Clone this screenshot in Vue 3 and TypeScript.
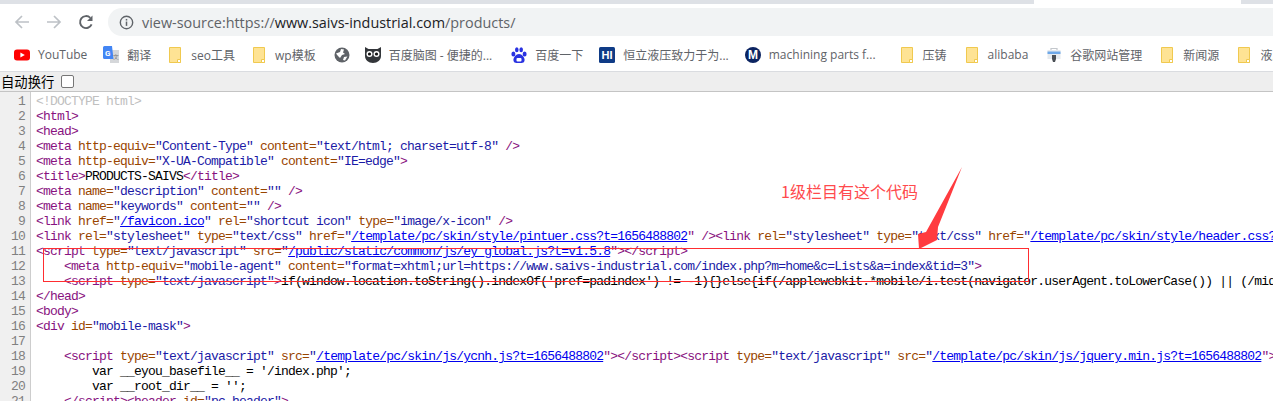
<script setup lang="ts">
type Seg = { c: string; s: string }
const seg = (c: string) => (s: string): Seg => ({ c, s })
const t = seg('tag')
const a = seg('attr')
const v = seg('val')
const l = seg('link')
const x = seg('txt')
const d = seg('doc')
const jsType = [a('type='), v('"text/javascript"')]

const lines: Seg[][] = [
  [d('<!DOCTYPE html>')],
  [t('<html>')],
  [t('<head>')],
  [t('<meta '), a('http-equiv='), v('"Content-Type"'), t(' '), a('content='), v('"text/html; charset=utf-8"'), t(' />')],
  [t('<meta '), a('http-equiv='), v('"X-UA-Compatible"'), t(' '), a('content='), v('"IE=edge"'), t('>')],
  [t('<title>'), x('PRODUCTS-SAIVS'), t('</title>')],
  [t('<meta '), a('name='), v('"description"'), t(' '), a('content='), v('""'), t(' />')],
  [t('<meta '), a('name='), v('"keywords"'), t(' '), a('content='), v('""'), t(' />')],
  [t('<link '), a('href='), v('"'), l('/favicon.ico'), v('"'), t(' '), a('rel='), v('"shortcut icon"'), t(' '), a('type='), v('"image/x-icon"'), t(' />')],
  [t('<link '), a('rel='), v('"stylesheet"'), t(' '), a('type='), v('"text/css"'), t(' '), a('href='), v('"'), l('/template/pc/skin/style/pintuer.css?t=1656488802'), t('" /><link '), a('rel='), v('"stylesheet"'), t(' '), a('type='), v('"text/css"'), t(' '), a('href='), v('"'), l('/template/pc/skin/style/header.css?t=1656488802'), t('" />')],
  [t('<script '), ...jsType, t(' '), a('src='), v('"'), l('/public/static/common/js/ey_global.js?t=v1.5.8'), t('"></' + 'script>')],
  [x('    '), t('<meta '), a('http-equiv='), v('"mobile-agent"'), t(' '), a('content='), v('"format=xhtml;url=https://www.saivs-industrial.com/index.php?m=home&c=Lists&a=index&tid=3"'), t('>')],
  [x('    '), t('<script '), ...jsType, t('>'), x("if(window.location.toString().indexOf('pref=padindex') != -1){}else{if(/applewebkit.*mobile/i.test(navigator.userAgent.toLowerCase()) || (/midp|symbianos|nokia/i))}")],
  [t('</head>')],
  [t('<body>')],
  [t('<div '), a('id='), v('"mobile-mask"'), t('>')],
  [],
  [x('    '), t('<script '), ...jsType, t(' '), a('src='), v('"'), l('/template/pc/skin/js/ycnh.js?t=1656488802'), t('"></' + 'script><script '), ...jsType, t(' '), a('src='), v('"'), l('/template/pc/skin/js/jquery.min.js?t=1656488802'), t('"></' + 'script>')],
  [x("        var __eyou_basefile__ = '/index.php';")],
  [x("        var __root_dir__ = '';")],
  [x('    '), t('</' + 'script><header '), a('id='), v('"pc-header"'), t('>')]
]

type Mark = { icon: string; label?: string; extra?: number }
const marks: Mark[] = [
  { icon: 'yt', label: 'YouTube' },
  { icon: 'tr', label: '翻译', extra: -1 },
  { icon: 'fd', label: 'seo工具', extra: 1 },
  { icon: 'fd', label: 'wp模板', extra: 1 },
  { icon: 'gl', extra: 1 },
  { icon: 'ow', label: '百度脑图 - 便捷的...', extra: -2 },
  { icon: 'pw', label: '百度一下', extra: 2 },
  { icon: 'hi', label: '恒立液压致力于为...', extra: -1 },
  { icon: 'mm', label: 'machining parts f...', extra: -1 },
  { icon: 'fd', label: '压铸', extra: 8 },
  { icon: 'fd', label: 'alibaba', extra: 2 },
  { icon: 'gw', label: '谷歌网站管理', extra: 1 },
  { icon: 'fd', label: '新闻源', extra: 2 },
  { icon: 'fd', label: '液压', extra: 2 }
]
</script>

<template>
  <div class="page">
    <div class="tabstrip">
      <div class="activetab"></div>
    </div>
    <div class="toolbar">
      <svg class="nav" viewBox="0 0 16 16"><path d="M15 8H2.500M8 2 2 8l6 6" fill="none" stroke="#bdc1c6" stroke-width="1.700" /></svg>
      <svg class="nav" viewBox="0 0 16 16"><path d="M1 8h12.500M8 2l6 6-6 6" fill="none" stroke="#bdc1c6" stroke-width="1.700" /></svg>
      <svg class="nav" viewBox="0 0 16 16"><path d="M13.600 10.400A6 6 0 1 1 12.300 3.800" fill="none" stroke="#5f6368" stroke-width="1.900" /><path d="M14.500 1.500v5.500H9z" fill="#5f6368" /></svg>
      <div class="omni">
        <svg class="info" viewBox="0 0 16 16"><circle cx="8" cy="8" r="6.600" fill="none" stroke="#5f6368" stroke-width="1.500" /><rect x="7.200" y="7" width="1.600" height="4.600" fill="#5f6368" /><rect x="7.200" y="4.200" width="1.600" height="1.700" fill="#5f6368" /></svg>
        <span class="url"><span class="dim">view-source:https://</span>www.saivs-industrial.com<span class="dim">/products/</span></span>
      </div>
    </div>
    <div class="bookmarks">
      <div v-for="(m, i) in marks" :key="i" class="mark" :style="{ marginLeft: (m.extra ?? 0) + 'px' }">
        <svg v-if="m.icon === 'yt'" class="ic" viewBox="0 0 16 16"><rect x="0" y="2.500" width="16" height="11" rx="3" fill="#f00" /><path d="M6.400 5.600 10.800 8l-4.400 2.400z" fill="#fff" /></svg>
        <svg v-else-if="m.icon === 'tr'" class="ic tall" viewBox="0 0 16 17"><path d="M7 4h9v13H7z" fill="#d5d7da" /><path d="M1.500 0H9l1.500 13H1.500A1.500 1.500 0 0 1 0 11.500v-10A1.500 1.500 0 0 1 1.500 0z" fill="#4285f4" /><text x="2" y="9.500" font-size="8" font-weight="700" fill="#fff" font-family="Roboto, sans-serif">G</text><text x="10" y="13" font-size="6" fill="#777" font-family="Roboto, sans-serif">文</text></svg>
        <svg v-else-if="m.icon === 'fd'" class="fold" viewBox="0 0 12 16"><path d="M.5.5h11v15H.5z" fill="#fee394" stroke="#f0c94f" /><path d="M8.500 12.500h3v3h-3z" fill="#fff" stroke="#f0c94f" /></svg>
        <svg v-else-if="m.icon === 'gl'" class="ic globe" viewBox="0 0 16 16"><circle cx="8" cy="8" r="7.500" fill="#5f6368" /><path d="M2 6.500 6 5l1-3 3 .5-1 3 2 1.500-3 1L6 11 4 9zM10 10l3.400-.5L11 13.500 9 13z" fill="#fff" /></svg>
        <svg v-else-if="m.icon === 'ow'" class="ic" viewBox="0 0 16 16"><path d="M0 0 3.500 2h9L16 0v9c0 4-3.500 7-8 7s-8-3-8-7z" fill="#33363a" /><circle cx="4.500" cy="7" r="3" fill="#fff" /><circle cx="11.500" cy="7" r="3" fill="#fff" /><circle cx="4.500" cy="7" r="1.600" fill="#111" /><circle cx="11.500" cy="7" r="1.600" fill="#111" /></svg>
        <svg v-else-if="m.icon === 'pw'" class="ic paw" viewBox="0 0 16 16"><g fill="#2932e1"><ellipse cx="2.400" cy="7" rx="2" ry="2.600" /><ellipse cx="13.600" cy="7" rx="2" ry="2.600" /><ellipse cx="5.800" cy="2.800" rx="1.800" ry="2.500" /><ellipse cx="10.200" cy="2.800" rx="1.800" ry="2.500" /><path d="M8 7c3 0 5.600 3.400 5.600 6 0 2.400-2 3-3 3H5.400c-1 0-3-.6-3-3C2.400 10.400 5 7 8 7z" /></g><rect x="5.500" y="11" width="5" height="3.500" rx="1" fill="#fff" /></svg>
        <svg v-else-if="m.icon === 'hi'" class="ic" viewBox="0 0 16 16"><rect width="16" height="16" rx="1.500" fill="#0f3b86" /><text x="8" y="12" text-anchor="middle" font-size="11" font-weight="900" fill="#fff" font-family="'Liberation Sans', sans-serif">HI</text></svg>
        <svg v-else-if="m.icon === 'mm'" class="ic" viewBox="0 0 16 16"><circle cx="8" cy="8" r="8" fill="#0c2461" /><text x="8" y="12.300" text-anchor="middle" font-size="12" font-weight="700" fill="#fff" font-family="'Liberation Sans', sans-serif">M</text></svg>
        <svg v-else-if="m.icon === 'gw'" class="ic gw" viewBox="0 0 16 16"><path d="M5 3V1.500h6V3" fill="none" stroke="#c3c7cc" stroke-width="1.200" /><rect x="1.500" y="3" width="13" height="9" fill="#e6eaee" /><rect x="1.500" y="4.500" width="13" height="2.500" fill="#6ea8e8" /><path d="M6 8h4v4l-1 3H7l-1-3z" fill="#4a4f55" /></svg>
        <span v-if="m.label" class="lbl">{{ m.label }}</span>
      </div>
    </div>
    <div class="wrapbar">
      <span>自动换行</span>
      <span class="check"></span>
    </div>
    <div class="source">
      <div class="gutter">
        <div v-for="(_, i) in lines" :key="i" class="num">{{ i + 1 }}</div>
      </div>
      <div class="code">
        <div v-for="(line, i) in lines" :key="i" class="line"><span v-for="(s, j) in line" :key="j" :class="s.c">{{ s.s }}</span></div>
      </div>
    </div>

    <div class="note">1级栏目有这个代码</div>
    <div class="redbox"></div>
    <svg class="arrow" viewBox="0 0 60 100" width="60" height="100"><path d="M52 0 28 60 27 73 9 82 8 67 16 65z" fill="#ff3b3f" /></svg>
  </div>
</template>

<style scoped>
.page {
  position: relative;
  width: 1273px;
  height: 401px;
  overflow: hidden;
  display: flex;
  flex-direction: column;
  background: #fff;
}
.tabstrip {
  height: 4px;
  flex: none;
  background: #dee1e6;
  position: relative;
}
.activetab {
  position: absolute;
  left: 1034px;
  width: 207px;
  top: 0;
  height: 4px;
  background: #fff;
}
.toolbar {
  height: 28px;
  flex: none;
  display: flex;
  align-items: flex-start;
  padding-top: 4px;
  background: #fff;
}
.nav {
  width: 16px;
  height: 16px;
  margin-top: 6px;
  margin-left: 14px;
  margin-right: 2px;
  flex: none;
}
.omni {
  margin-left: 12px;
  flex: 1;
  height: 28px;
  background: #f1f3f4;
  border-radius: 14px 0 0 14px;
  display: flex;
  align-items: center;
  padding-left: 11px;
}
.info {
  width: 15px;
  height: 15px;
  flex: none;
}
.url {
  margin-left: 8px;
  font-family: "Open Sans", "Noto Sans", sans-serif;
  font-size: 14.400px;
  color: #202124;
  white-space: nowrap;
}
.dim {
  color: #5f6368;
}
.bookmarks {
  flex: none;
  display: flex;
  align-items: center;
  gap: 17px;
  padding: 2px 0 0 14px;
  box-sizing: border-box;
  height: 36px;
  border-bottom: 1px solid #dadce0;
  overflow: hidden;
  background: #fff;
}
.mark {
  display: flex;
  align-items: center;
  gap: 8px;
  flex: none;
}
.ic {
  width: 16px;
  height: 16px;
  flex: none;
}
.tall {
  height: 17px;
}
.fold {
  width: 12px;
  height: 16px;
  flex: none;
  margin-right: 2px;
}
.lbl {
  font-family: "Open Sans", "Noto Sans CJK SC", sans-serif;
  font-size: 12px;
  color: #5f6368;
  white-space: nowrap;
}
.wrapbar {
  height: 20px;
  box-sizing: border-box;
  flex: none;
  background: #eeeeee;
  border-bottom: 1px solid #c4c4c4;
  display: flex;
  align-items: center;
  padding-left: 1px;
  font-family: "Noto Sans CJK SC", sans-serif;
  font-size: 13.330px;
  color: #000;
  gap: 7px;
}
.check {
  width: 11px;
  height: 11px;
  border: 1px solid #767676;
  border-radius: 2px;
  background: #fff;
}
.source {
  flex: 1;
  display: flex;
  min-height: 0;
  overflow: hidden;
  padding-top: 2px;
  font-family: "Liberation Mono", monospace;
  font-size: 13px;
  letter-spacing: -0.8px;
  line-height: 15px;
}
.gutter {
  width: 30px;
  flex: none;
  background: #f0f0f0;
  border-right: 1px solid #cdcdcd;
  margin-top: -2px;
  padding-top: 2px;
}
.num {
  height: 15px;
  padding-right: 5px;
  text-align: right;
  color: #808080;
}
.code {
  flex: 1;
  min-width: 0;
  padding-left: 5px;
}
.line {
  height: 15px;
  white-space: pre;
}
.tag {
  color: #881280;
}
.attr {
  color: #994500;
}
.val {
  color: #1a1aa6;
}
.link {
  color: #0000ee;
  text-decoration: underline;
}
.txt {
  color: #000;
}
.doc {
  color: #c0c0c0;
}
.note {
  position: absolute;
  left: 781px;
  top: 180px;
  font-family: "Noto Sans CJK SC", sans-serif;
  font-size: 16px;
  line-height: 22px;
  color: #ff4a4d;
  white-space: nowrap;
}
.redbox {
  position: absolute;
  left: 43px;
  top: 248px;
  width: 984px;
  height: 32px;
  border: 1px solid #ff2d30;
}
.arrow {
  position: absolute;
  left: 910px;
  top: 167px;
}
</style>

<style>
html,
body {
  margin: 0;
  background: #fff;
}
</style>
